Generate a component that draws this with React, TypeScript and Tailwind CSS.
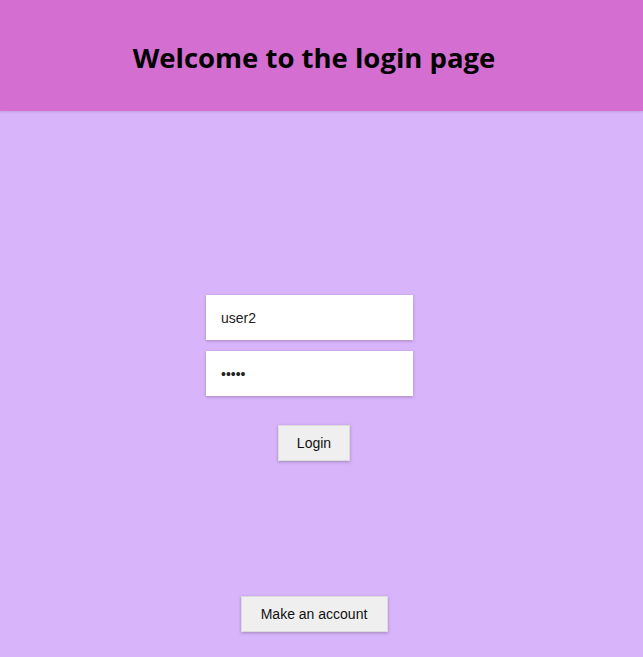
export default function App() {
  return (
    <div className="min-h-[657px] w-full bg-[#d8b4fa] flex flex-col" style={{ fontFamily: '"Liberation Sans", Arial, sans-serif' }}>
      <header className="h-[111px] bg-[#d56ed1] shadow-[0_1px_2px_rgba(0,0,0,0.12)] flex items-center justify-center pr-[15px]">
        <h1 className="text-[27.5px] font-bold text-black pt-[4px]" style={{ fontFamily: '"Open Sans", "DejaVu Sans", sans-serif' }}>
          Welcome to the login page
        </h1>
      </header>
      <main className="flex flex-col items-center pt-[184px] pr-[15px]">
        <input
          className="mr-[9px] w-[207px] h-[45px] bg-white px-[15px] text-[14px] text-[#222] outline-none shadow-[0_1px_3px_rgba(0,0,0,0.25)]"
          defaultValue="user2"
          readOnly
        />
        <input
          type="password"
          className="mr-[9px] mt-[11px] w-[207px] h-[45px] bg-white px-[15px] text-[14px] text-[#222] outline-none shadow-[0_1px_3px_rgba(0,0,0,0.25)]"
          defaultValue="abcde"
          readOnly
        />
        <button className="mt-[29px] w-[72px] h-[36px] bg-[#efefef] border border-[#dcdcdc] text-[14px] text-[#111] shadow-[0_1px_3px_rgba(0,0,0,0.25)]">
          Login
        </button>
        <button className="mt-[135px] w-[147px] h-[36px] bg-[#efefef] border border-[#dcdcdc] text-[14px] text-[#111] shadow-[0_1px_3px_rgba(0,0,0,0.25)]">
          Make an account
        </button>
      </main>
    </div>
  );
}
